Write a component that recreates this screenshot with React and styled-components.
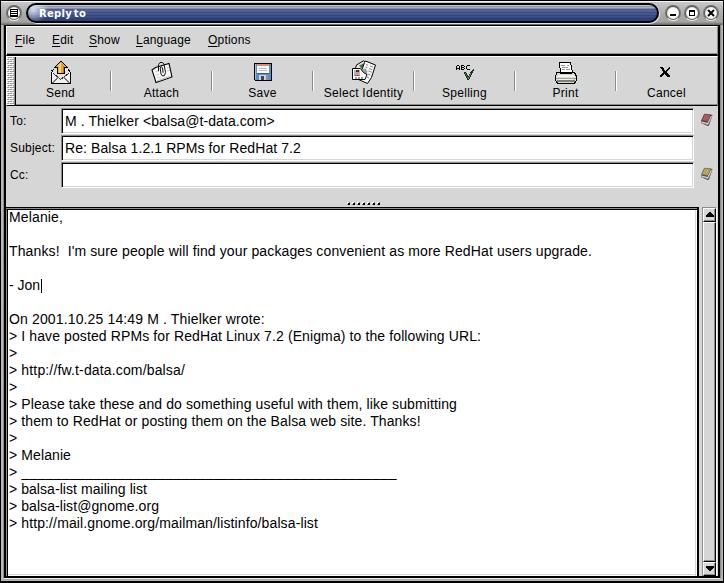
import React from "react";
import styled, { createGlobalStyle } from "styled-components";

const Global = createGlobalStyle`
  html, body { margin: 0; overflow: hidden; background: #000; }
  * { box-sizing: border-box; }
  svg { display: block; }
`;

const Frame = styled.div`
  width: 724px;
  height: 583px;
  display: flex;
  flex-direction: column;
  border: 1px solid #000;
  border-top-width: 0;
  border-bottom-width: 2px;
  background: #b9b7b7;
  font: 12px/14px "Liberation Sans", Arial, sans-serif;
  color: #000;
`;

const TitleBar = styled.div`
  height: 25px;
  flex: none;
  display: flex;
  align-items: flex-start;
  padding: 3px 3px 0 5px;
  border-top: 1px solid #000;
  background: linear-gradient(#f4f4f4 0 1px, #c9c9c9 1px, #bdbdbd 5px, #a9a9a7 14px, #a4a5a0 21px, #5f615c 24px);
`;

const Pill = styled.div`
  width: 633px;
  height: 20px;
  flex: none;
  margin: -1px 6px 0 1px;
  padding: 1px 0 0 11px;
  border: 2px solid #06060a;
  border-radius: 10px;
  box-shadow: 1px 1px 0 #e4e4e4;
  color: #fff;
  font: bold 10px/15px "DejaVu Sans", sans-serif;
  letter-spacing: 0.3px;
  word-spacing: -2px;
  background:
    radial-gradient(ellipse 16px 13px at 5px 5px, rgba(235, 238, 250, 0.85), rgba(235, 238, 250, 0)),
    repeating-linear-gradient(transparent 0 1px, rgba(10, 20, 70, 0.22) 1px 2px, transparent 2px 3px),
    linear-gradient(#c4c6ce 0, #a4a8b8 3px, #5f6d9c 4px, #4a5a91 8px, #344680 14px, #2c3a6c 16px);
`;

const RoundButton = styled.div`
  width: 16px;
  height: 16px;
  margin: 1px ${(p) => (p.$last ? 0 : 3)}px 0 0;
  flex: none;
  display: flex;
  align-items: center;
  justify-content: center;
  border-radius: 50%;
  border: 1px solid #777;
  border-color: #666 #777 #eee #777;
  background: radial-gradient(circle, #fff 0 4.5px, #e0e0e0 5.5px, #555 6.6px, #aaa 8px);
`;

const Client = styled.div`
  flex: 1;
  min-height: 0;
  display: flex;
  flex-direction: column;
  margin: 0 3px 3px 3px;
  border: solid #000;
  border-width: 1px 2px 2px 2px;
  background: #d6d6d6;
  box-shadow: -1px 0 0 #8e8c8c, -2px 0 0 #c0b9b9, 1px 0 0 #8a8a88, 2px 0 0 #aaa, 0 1px 0 #eee, 0 2px 0 #aaa;
`;

const MenuBar = styled.div`
  height: 30px;
  flex: none;
  display: flex;
  padding: 6px 0 0 8px;
  border: solid;
  border-width: 1px 1px 2px 1px;
  border-color: #fff #8c8c8c #000 #fff;
  box-shadow: inset 0 -1px 0 #939393;
`;

const MenuItem = styled.div`
  width: ${(p) => p.$w}px;
  letter-spacing: 0.2px;
  white-space: nowrap;
  u { text-underline-offset: 2px; text-decoration-thickness: 1px; text-decoration-skip-ink: none; }
`;

const ToolBar = styled.div`
  height: 50px;
  flex: none;
  display: flex;
  border: 1px solid;
  border-color: #fff #8c8c8c #000 #fff;
  box-shadow: inset 0 -1px 0 #8c8f88;
`;

const Handle = styled.div`
  width: 9px;
  flex: none;
  border-right: 1px solid #000;
  background:
    linear-gradient(90deg, transparent 7px, #8c8c8c 7px),
    conic-gradient(from 90deg at 1px 1px, transparent 270deg, #fff 0) 1px 1px / 5px 4px,
    conic-gradient(from 90deg at 1px 1px, transparent 270deg, #9c9c9c 0) 2px 2px / 5px 4px,
    conic-gradient(from 90deg at 1px 1px, transparent 270deg, #fff 0) 4px 3px / 5px 4px,
    conic-gradient(from 90deg at 1px 1px, transparent 270deg, #9c9c9c 0) 5px 4px / 5px 4px,
    #d6d6d6;
`;

const Tool = styled.div`
  width: 89px;
  flex: none;
  display: flex;
  flex-direction: column;
  align-items: center;
  padding-top: 3px;
  letter-spacing: 0.27px;
  white-space: nowrap;
`;

const ToolIcon = styled.div`
  height: 26px;
`;

const Divider = styled.div`
  width: 2px;
  height: 20px;
  flex: none;
  margin: 14px 5px 0 5px;
  border-left: 1px solid #8c8c8c;
  border-right: 1px solid #fff;
`;

const Fields = styled.div`
  height: 101px;
  flex: none;
  display: grid;
  grid-template-columns: 51px 633px 1fr;
  grid-auto-rows: 27px;
  padding: 2px 0 0 4px;
`;

const Label = styled.div`
  padding-top: 6px;
  letter-spacing: 0.2px;
`;

const Entry = styled.div`
  height: 26px;
  padding: 4px 0 0 3px;
  border: 1px solid;
  border-color: #8c8c8c #fff #fff #8c8c8c;
  box-shadow: inset 1px 1px 0 #000, inset -1px -1px 0 #d6d6d6;
  background: #fff;
  font-size: 14px;
  line-height: 17px;
  letter-spacing: ${(p) => p.$ls || 0}px;
  white-space: pre;
`;

const Book = styled.div`
  padding: 5px 0 0 6px;
`;

const Grip = styled.div`
  grid-column: 1 / 4;
  display: flex;
  justify-content: center;
  gap: 2px;
  padding: 13px 1px 0 0;
`;

const Dot = styled.i`
  width: 3px;
  height: 3px;
  border: 1px solid;
  border-color: #fff #000 #000 #fff;
  background: #000;
`;

const Body = styled.div`
  flex: 1;
  min-height: 0;
  display: flex;
`;

const TextArea = styled.div`
  width: 693px;
  flex: none;
  border: solid #000;
  border-width: 1px 2px 0 0;
  box-shadow: inset 0 1px 0 #8c8c8c, inset 0 2px 0 #000, inset 1px 0 0 #8c8c8c, inset 2px 0 0 #000,
    inset -1px 0 0 #fff, inset -2px 0 0 #d6d6d6, inset 0 -1px 0 #fff, inset 0 -2px 0 #d6d6d6;
  background: #fff;
  padding: 1px 0 0 3px;
`;

const Line = styled.div`
  height: 17px;
  font-size: 14px;
  line-height: 17px;
  white-space: pre;
  letter-spacing: ${(p) => p.$ls}px;
`;

const Caret = styled.span`
  display: inline-block;
  width: 1px;
  height: 14px;
  margin-left: 1px;
  vertical-align: -3px;
  background: #000;
`;

const ScrollBar = styled.div`
  width: 15px;
  margin-left: 3px;
  display: flex;
  flex-direction: column;
  border-left: 1px solid #8c8c8c;
  border-top: 1px solid #8c8c8c;
  border-right: 1px solid #fff;
`;

const Raised = styled.div`
  height: ${(p) => (p.$thumb ? "auto" : "14px")};
  flex: ${(p) => (p.$thumb ? 1 : "none")};
  display: flex;
  align-items: flex-start;
  justify-content: center;
  padding-top: ${(p) => (p.$thumb ? 0 : 3)}px;
  border: 1px solid;
  border-color: #fff #000 #000 #fff;
  box-shadow: inset -1px -1px 0 #8c8c8c;
  background: #d6d6d6;
`;

const Svg = ({ w, h, children }) => (
  <svg width={w} height={h} viewBox={`0 0 ${w} ${h}`} shapeRendering="crispEdges" fill="none">
    {children}
  </svg>
);

const SendIcon = () => (
  <Svg w={20} h={24}>
    <path d="M2 11L0.5 12.5V23.5H19.5V12.5L17 9" stroke="#000" fill="#f1f1f1" />
    <path d="M3 9.5h14l1 3-8 7-8-7z" fill="#e4e4e4" />
    <path d="M0.5 11L3 9M19 11l-2-2" stroke="#000" />
    <path d="M2 13l7.5 6.5L18 13" stroke="#333" />
    <path d="M1.5 23l6-6M18.5 23l-6-6" stroke="#777" />
    <path d="M10 1L3.5 7.5H6.5V13.5H13.5V7.5H16.5Z" fill="#e3a83a" stroke="#000" />
    <path d="M10 3v10h-2v-7h-2z" fill="#f6d078" />
    <path d="M12 6h1v7h-1z" fill="#b87a18" />
  </Svg>
);

const AttachIcon = () => (
  <svg width="22" height="24" viewBox="0 0 22 24" fill="none">
    <path d="M1 10L4.500 7.500 18 3.500 21 17 5 22.500z" fill="#f8f8f8" stroke="#000" strokeWidth="1.1" />
    <path d="M5.500 20.500l14-5v1.500l-13.500 4.500z" fill="#c4c4c4" />
    <path d="M4 12l4-1M5 15l3-1M16 8l2-.5M16 11l3-1M6 18l4-1" stroke="#c8c8c8" />
    <path d="M7.500 11L7.500 4.500 9 2.500h2.500L13 4l1.500 8.500-1 3-2 .5-1.500-2-.8-6 1-1.200 1.300 1 .6 5" stroke="#111" />
  </svg>
);

const SaveIcon = () => (
  <Svg w={18} h={24}>
    <path d="M0.5 3.500h17v17h-16l-1-1z" fill="#5b8fc4" stroke="#000" />
    <path d="M1 4h1v15h-1z" fill="#9cc0e4" />
    <path d="M3 4h12v9h-12z" fill="#fff" />
    <path d="M3 4h12v2h-12z" fill="#e08a74" />
    <path d="M5 8h8v1h-8zM5 10h8v1h-8z" fill="#b8b8b8" />
    <path d="M3 13h12v1h-12z" fill="#32608e" />
    <path d="M5 15h9v5h-9z" fill="#cfd3d8" />
    <path d="M7 16h3v4h-3z" fill="#3a4854" />
    <path d="M12 15h2v5h-2z" fill="#888f96" />
  </Svg>
);

const IdentityIcon = () => (
  <svg width="24" height="24" viewBox="0 0 24 24" fill="none">
    <path d="M3.500 8L4.500 5 11.500 0.800 15 3.500 9 12 3 10z" fill="#e8e8e4" stroke="#000" />
    <path d="M7 5.500l4.500-2 2 1-4 4z" fill="#53654c" />
    <path d="M12.500 2.500l1-1.500 10 4-4 12.500-4 6-9-4z" fill="#f7f7f4" stroke="#000" />
    <path d="M14 4.500l2 .8M13.500 7l2 .8M18 6l3 1.200M17 8.500l3 1.200M16.500 11l3 1.200M15.500 14l3 1M15 17l2 1" stroke="#888" />
    <path d="M9 9.500l4.500-1 2 3-2 4-4-1z" fill="#8e999e" />
    <path d="M10.500 10h2v3h-2z" fill="#c9a990" />
    <path d="M0.500 8.500h8l3 4 3.500 2-2 5h-12.500z" fill="#fff" stroke="#000" />
    <path d="M2 10h6v6h-6z" fill="#a4bcd4" />
    <path d="M4 10h3v3h-3z" fill="#4c2c20" />
    <path d="M4 12h3v2.500h-3z" fill="#d09a74" />
    <path d="M2.500 15h5v1h-5z" fill="#b63e32" />
    <path d="M3 18h2M6 18h2M9 18h2" stroke="#333" />
  </svg>
);

const SpellIcon = () => (
  <Svg w={20} h={24}>
    <path d="M1 6h1v4h-1zM2 5h2v1h-2zM4 6h1v4h-1zM2 8h2v1h-2z" fill="#000" />
    <path d="M6 5h3v1h-3zM6 6h1v4h-1zM9 6h1v1h-1zM7 7h2v1h-2zM9 8h1v1h-1zM7 9h2v1h-2z" fill="#000" />
    <path d="M12 5h3v1h-3zM11 6h1v3h-1zM12 9h3v1h-3z" fill="#000" />
    <path d="M9 12h2v1h1v2h1v1h1v-2h1v-2h1v-1h1v-1h1v-1h1v2h-1v2h-1v2h-1v2h-1v2h-1v1h-2v-2h-1v-2h-1v-2h-1z" fill="#1c2c1c" />
    <path d="M10 13h1v2h1v2h2v-2h1v-2h1v2h-1v2h-1v2h-1v-1h-1v-2h-1v-2h-1z" fill="#4a8a48" />
  </Svg>
);

const PrintIcon = () => (
  <Svg w={22} h={24}>
    <path d="M4.500 2.500h11l2 10h-12z" fill="#fff" stroke="#000" />
    <path d="M6 5.500h4M12 5.500h2M7 7.500h6M7 9.500h3M11 9.500h4" stroke="#999" />
    <path d="M2 12.500h3l1 1h10l1-1h2.500l2 4v4l-2 2.500h-17l-2-2.500v-4z" fill="#d8dad2" stroke="#000" />
    <path d="M3 15h16l1 2h-18z" fill="#f6f6f2" />
    <path d="M1 18h20v1h-20z" fill="#a0a49a" />
    <path d="M2 20h18v2h-18z" fill="#7c8076" />
    <path d="M3 19h15v1h-15z" fill="#eee" />
  </Svg>
);

const CancelIcon = () => (
  <Svg w={14} h={24}>
    <path d="M0 7h3v1h1v2h1v1h1v-1h1v-1h1v-1h1v-1h1v2h-1v1h-1v1h-1v2h1v1h1v1h1v2h-3v-1h-1v-1h-1v-1h-1v1h-1v1h-1v1h-2v-2h1v-1h1v-1h1v-2h-1v-2h-1v-1h-1z" fill="#000" />
  </Svg>
);

const BookIcon = ({ color, dark }) => (
  <svg width="14" height="14" viewBox="0 0 14 14">
    <path d="M4 1.500L12.500 2 9 12.500 7.500 13 1 10 1.500 7.500z" fill="#4a4644" />
    <path d="M4.500 1.200L11 1.800 8 8.500 1.500 7.500z" fill={color} stroke={dark} strokeWidth=".7" />
    <path d="M1.500 8.500l6 1.500 3.500-7 1 .5-4 8.500-6.200-2z" fill="#e8e8e4" />
    <path d="M2.500 10l5.500 1.500 3.500-7" stroke="#777" strokeWidth=".6" fill="none" />
  </svg>
);

const tools = [
  ["Send", SendIcon], ["Attach", AttachIcon], ["Save", SaveIcon], ["Select Identity", IdentityIcon],
  ["Spelling", SpellIcon], ["Print", PrintIcon], ["Cancel", CancelIcon],
];

const menus = [["File", 37], ["Edit", 37], ["Show", 47], ["Language", 72], ["Options", 60]];

const lines = [
  ["Melanie,", 0.135], ["", 0],
  ["Thanks!  I'm sure people will find your packages convenient as more RedHat users upgrade.", 0.12], ["", 0],
  ["- Jon", 0, true], ["", 0],
  ["On 2001.10.25 14:49 M . Thielker wrote:", 0.139],
  ["> I have posted RPMs for RedHat Linux 7.2 (Enigma) to the following URL:", 0.109],
  [">", 0], ["> http://fw.t-data.com/balsa/", 0.152], [">", 0],
  ["> Please take these and do something useful with them, like submitting", 0.113],
  ["> them to RedHat or posting them on the Balsa web site. Thanks!", 0.11],
  [">", 0], ["> Melanie", 0.101],
  ["> _______________________________________________", 0.2],
  ["> balsa-list mailing list", 0.058], ["> balsa-list@gnome.org", 0.07],
  ["> http://mail.gnome.org/mailman/listinfo/balsa-list", 0.116],
];

export default function App() {
  return (
    <Frame>
      <Global />
      <TitleBar>
        <RoundButton>
          <Svg w={10} h={10}><path d="M1.500 1.500h7v7h-7z" stroke="#000" /><path d="M2 3.500h6M2 5.500h6M2 7.500h6" stroke="#000" /></Svg>
        </RoundButton>
        <Pill>Reply to</Pill>
        <RoundButton><Svg w={8} h={8}><path d="M1 5h6v2h-6z" fill="#000" /></Svg></RoundButton>
        <RoundButton>
          <Svg w={8} h={8}><path d="M1.500 2v4.500h5V2M1 1.500h6" stroke="#000" /><path d="M1 1h6v2h-6z" fill="#000" /></Svg>
        </RoundButton>
        <RoundButton $last><svg width="8" height="8" viewBox="0 0 8 8"><path d="M1 1l6 6M7 1l-6 6" stroke="#000" strokeWidth="2" /></svg></RoundButton>
      </TitleBar>
      <Client>
        <MenuBar>
          {menus.map(([t, w]) => (
            <MenuItem key={t} $w={w}><u>{t[0]}</u>{t.slice(1)}</MenuItem>
          ))}
        </MenuBar>
        <ToolBar>
          <Handle />
          {tools.map(([t, Icon], i) => (
            <React.Fragment key={t}>
              {i > 0 && <Divider />}
              <Tool><ToolIcon><Icon /></ToolIcon>{t}</Tool>
            </React.Fragment>
          ))}
        </ToolBar>
        <Fields>
          <Label>To:</Label>
          <Entry $ls={0.091}>{"M . Thielker <balsa@t-data.com>"}</Entry>
          <Book><BookIcon color="#a85a5c" dark="#6c3234" /></Book>
          <Label>Subject:</Label>
          <Entry $ls={0.095}>Re: Balsa 1.2.1 RPMs for RedHat 7.2</Entry>
          <Book />
          <Label>Cc:</Label>
          <Entry />
          <Book><BookIcon color="#b5a562" dark="#766a36" /></Book>
          <Grip>{Array.from({ length: 7 }, (_, i) => <Dot key={i} />)}</Grip>
        </Fields>
        <Body>
          <TextArea>
            {lines.map(([t, ls, caret], i) => (
              <Line key={i} $ls={ls}>{t}{caret && <Caret />}</Line>
            ))}
          </TextArea>
          <ScrollBar>
            <Raised><Svg w={8} h={5}><path d="M3 0h2v1h1v1h1v1h1v2h-8v-2h1v-1h1v-1h1z" fill="#000" /></Svg></Raised>
            <Raised $thumb />
            <Raised><Svg w={8} h={5}><path d="M0 0h8v2h-1v1h-1v1h-1v1h-2v-1h-1v-1h-1v-1h-1z" fill="#000" /></Svg></Raised>
          </ScrollBar>
        </Body>
      </Client>
    </Frame>
  );
}
